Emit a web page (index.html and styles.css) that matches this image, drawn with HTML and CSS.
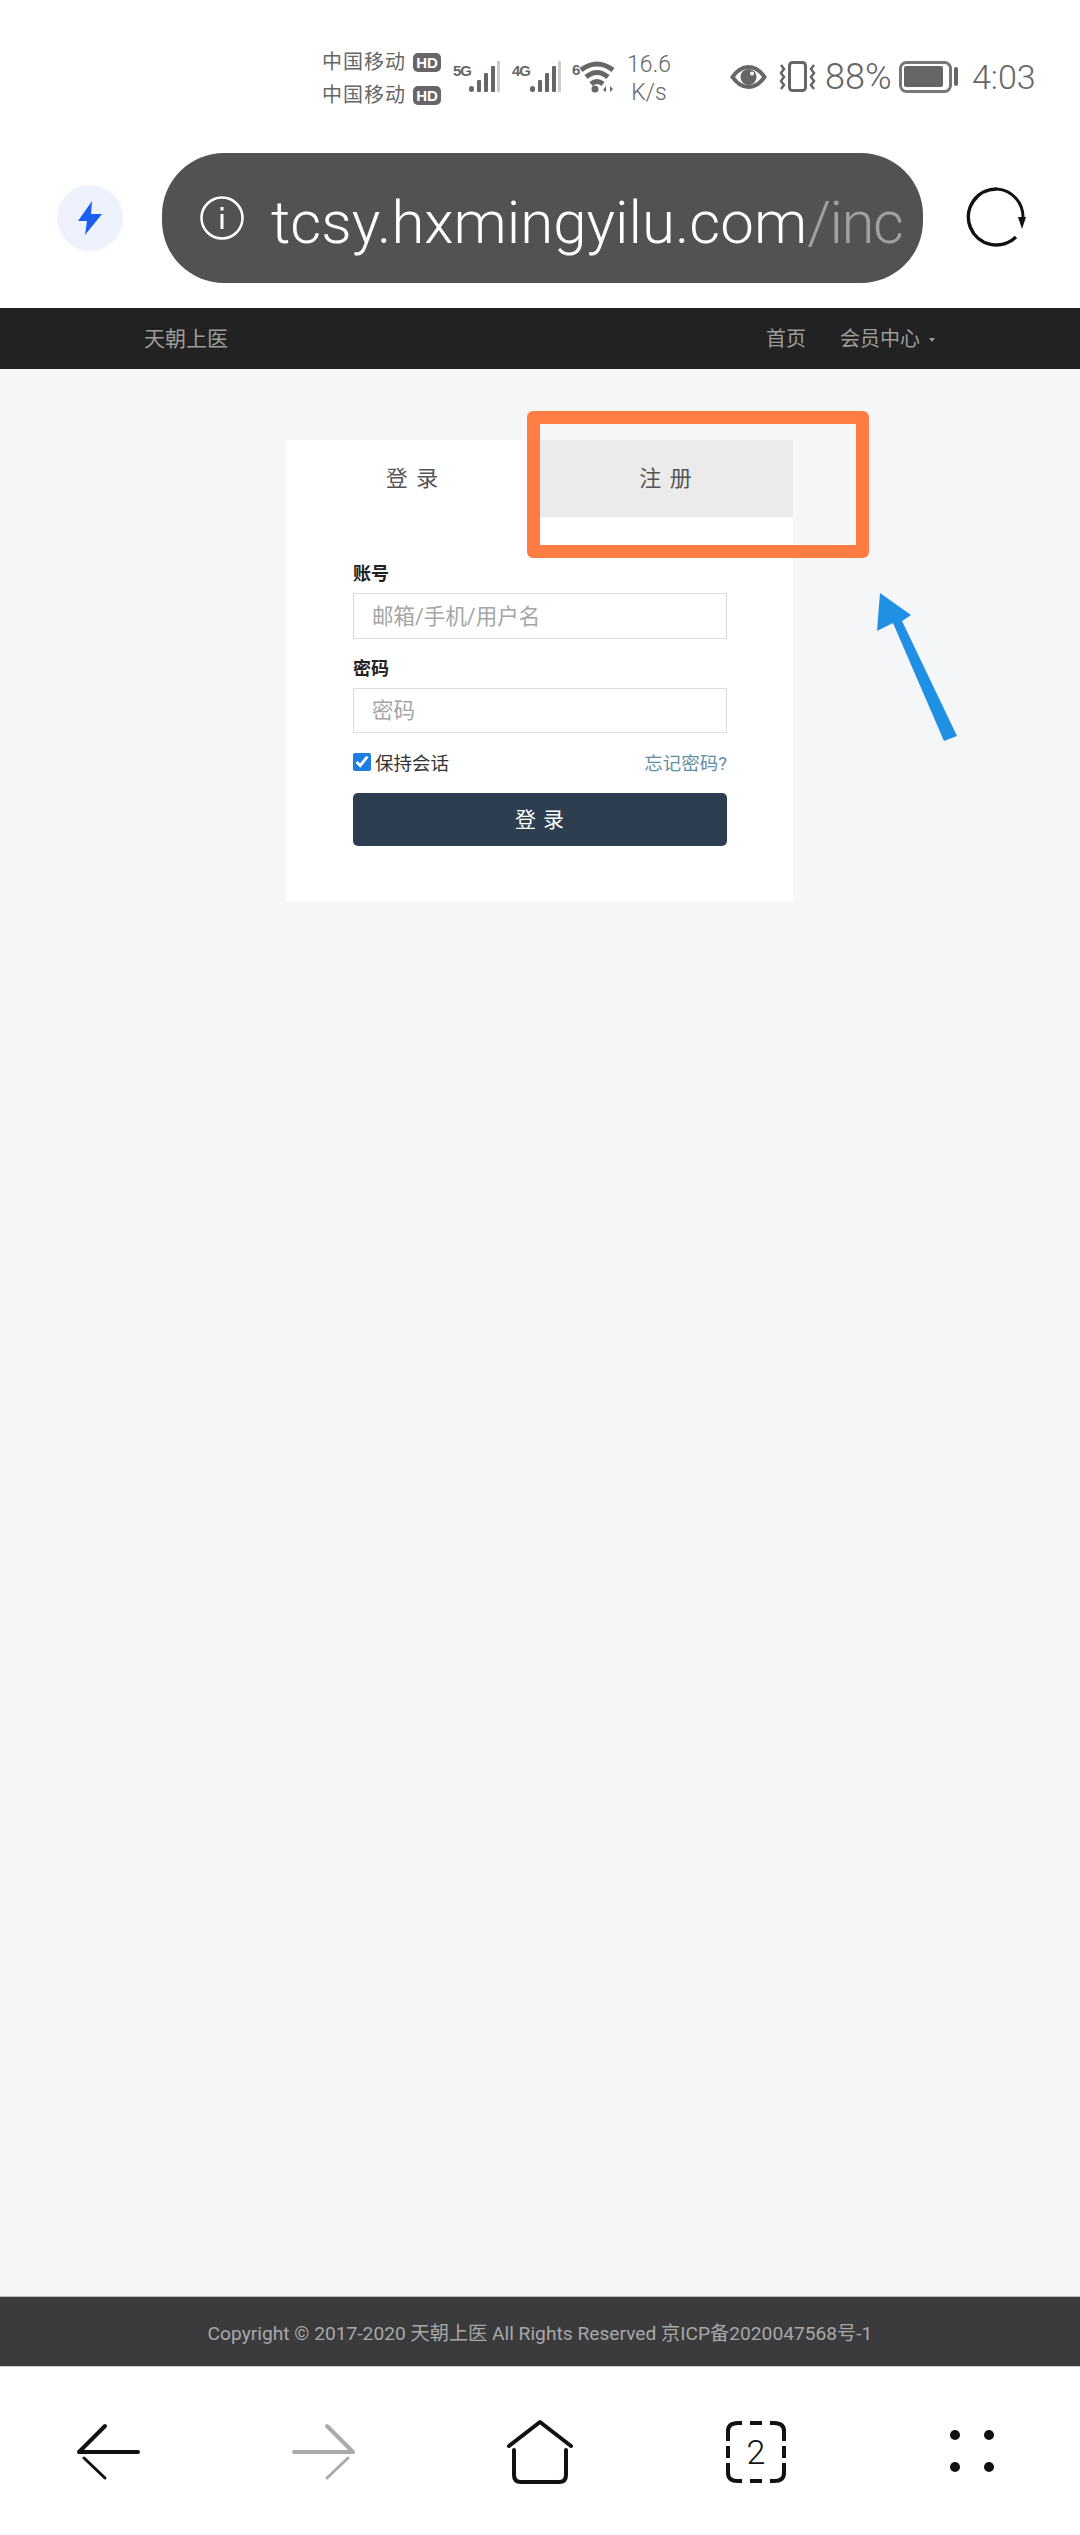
FILE: index.html
```html
<!DOCTYPE html>
<html lang="zh-CN">
<head>
  <meta charset="UTF-8">
  <meta name="viewport" content="width=device-width, initial-scale=1.0">
  <title>天朝上医</title>
  <link rel="stylesheet" href="styles.css">
</head>
<body>
  <div class="status-bar">
    <div class="carriers">
      <div class="carrier"><span>中国移动</span><b class="hd">HD</b></div>
      <div class="carrier"><span>中国移动</span><b class="hd">HD</b></div>
    </div>
    <svg class="signal" width="48" height="32" viewBox="0 0 48 32">
      <text class="net-label" x="0" y="15">5G</text>
      <rect x="16" y="25" width="5" height="6" rx="2.5" fill="#666"/>
      <rect x="24" y="19" width="4" height="12" rx="1" fill="#666"/>
      <rect x="31" y="12" width="4" height="19" rx="1" fill="#666"/>
      <rect x="38" y="5" width="4" height="26" rx="1" fill="#666"/>
      <rect x="44" y="0" width="3" height="31" fill="#ccc"/>
    </svg>
    <svg class="signal" width="49" height="32" viewBox="0 0 49 32">
      <text class="net-label" x="0" y="15">4G</text>
      <rect x="18" y="25" width="5" height="6" rx="2.5" fill="#666"/>
      <rect x="26" y="19" width="4" height="12" rx="1" fill="#666"/>
      <rect x="33" y="12" width="4" height="19" rx="1" fill="#666"/>
      <rect x="40" y="5" width="4" height="26" rx="1" fill="#666"/>
      <rect x="46" y="0" width="3" height="31" fill="#ccc"/>
    </svg>
    <svg class="wifi" width="44" height="32" viewBox="0 0 44 32">
      <text class="wifi-label" x="0" y="14">6</text>
      <g fill="none" stroke="#666" stroke-width="5">
        <path d="M9 9 Q25 -3 41 9"/>
        <path d="M14 16 Q25 7 36 16"/>
        <path d="M19 23 Q25 18 31 23"/>
      </g>
      <circle cx="23" cy="28" r="3.5" fill="#666"/>
      <path d="M34 25 L34 31 L31 29 Z M38 25 L41 28 L38 31 Z" fill="#666"/>
    </svg>
    <div class="speed"><span>16.6</span><span>K/s</span></div>
    <svg class="eye" width="39" height="26" viewBox="0 0 39 26">
      <path d="M1 13 Q9 1 19.500 1 Q30 1 38 13 Q30 25 19.500 25 Q9 25 1 13 Z" fill="#666"/>
      <path d="M6 13 Q12 5 19.500 5 Q27 5 33 13 Q27 21 19.500 21 Q12 21 6 13 Z" fill="#fff"/>
      <circle cx="19.500" cy="13" r="8" fill="#666"/>
      <circle cx="23" cy="9.500" r="2" fill="#fff"/>
    </svg>
    <svg class="vibrate" width="37" height="31" viewBox="0 0 37 31">
      <rect x="10.500" y="1.500" width="16" height="28" rx="3" fill="none" stroke="#666" stroke-width="3"/>
      <path d="M2 4 L5 8 L2 12 L5 16 L2 20 L5 24 L2 28" fill="none" stroke="#666" stroke-width="2.500"/>
      <path d="M35 4 L32 8 L35 12 L32 16 L35 20 L32 24 L35 28" fill="none" stroke="#666" stroke-width="2.500"/>
    </svg>
    <span class="status-text percent">88%</span>
    <svg class="battery" width="59" height="32" viewBox="0 0 59 32">
      <rect x="1.500" y="1.500" width="50" height="29" rx="6" fill="none" stroke="#777" stroke-width="3"/>
      <rect x="5" y="5" width="39" height="21" rx="2" fill="#666"/>
      <rect x="55" y="6" width="4" height="19" rx="2" fill="#666"/>
    </svg>
    <span class="status-text time">4:03</span>
  </div>

  <div class="toolbar">
    <div class="speed-dial">
      <svg width="26" height="34" viewBox="0 0 26 34">
        <path d="M15 0 L1 20 L10 20 L8 34 L25 13 L14 13 Z" fill="#1a5ff0"/>
      </svg>
    </div>
    <div class="address-pill">
      <svg class="info-icon" width="44" height="44" viewBox="0 0 44 44">
        <circle cx="22" cy="22" r="20.500" fill="none" stroke="#fff" stroke-width="2.500"/>
        <rect x="20.500" y="18" width="3" height="15" fill="#fff"/>
        <rect x="20.500" y="11" width="3" height="3.500" fill="#fff"/>
      </svg>
      <div class="url">tcsy.hxmingyilu.com<span class="url-path">/inc</span></div>
    </div>
    <svg class="reload" width="60" height="60" viewBox="0 0 60 60">
      <path d="M31 2 A28 28 0 1 0 50 50" fill="none" stroke="#111" stroke-width="3.500"/>
      <path d="M31 2 A28 28 0 0 1 57 31" fill="none" stroke="#111" stroke-width="3"/>
      <path d="M52 30 L60 30 L56 42 Z" fill="#111"/>
    </svg>
  </div>

  <nav class="site-nav">
    <a class="brand">天朝上医</a>
    <div class="nav-links">
      <a>首页</a>
      <a>会员中心<i class="caret"></i></a>
    </div>
  </nav>

  <main class="page">
    <div class="login-card">
      <div class="tabs">
        <div class="tab tab-active">登 录</div>
        <div class="tab">注 册</div>
      </div>
      <form class="login-form">
        <label class="field-label">账号</label>
        <input class="field-input" type="text" placeholder="邮箱/手机/用户名">
        <label class="field-label second">密码</label>
        <input class="field-input short" type="password" placeholder="密码">
        <div class="form-row">
          <label class="remember"><input type="checkbox" checked>保持会话</label>
          <a class="forgot">忘记密码?</a>
        </div>
        <button class="submit-btn" type="button">登 录</button>
      </form>
    </div>

    <!-- annotations drawn on top of the screenshot -->
    <div class="mark-box"></div>
    <svg class="mark-arrow" width="90" height="160" viewBox="0 0 90 160">
      <path d="M10 3 L41 25 L32 31 L87 146 L74 151 L23 33 L7 41 Z" fill="#2090e5"/>
    </svg>
  </main>

  <footer class="site-footer">Copyright © 2017-2020 天朝上医 All Rights Reserved 京ICP备2020047568号-1</footer>

  <div class="bottom-bar">
    <svg width="70" height="70" viewBox="0 0 70 70">
      <path d="M32 9 L6 35 L65 35" fill="none" stroke="#111" stroke-width="4" stroke-linecap="round" stroke-linejoin="round"/>
      <path d="M11 41 L32 61" fill="none" stroke="#111" stroke-width="3" stroke-linecap="round"/>
    </svg>
    <svg width="70" height="70" viewBox="0 0 70 70">
      <path d="M38 9 L64 35 L5 35" fill="none" stroke="#aaa" stroke-width="4" stroke-linecap="round" stroke-linejoin="round"/>
      <path d="M59 41 L38 61" fill="none" stroke="#aaa" stroke-width="3" stroke-linecap="round"/>
    </svg>
    <svg width="70" height="70" viewBox="0 0 70 70">
      <path d="M4 29 L35 5 L66 29" fill="none" stroke="#111" stroke-width="4" stroke-linecap="round" stroke-linejoin="round"/>
      <path d="M9 33 L9 58 Q9 65 16 65 L54 65 Q61 65 61 58 L61 33" fill="none" stroke="#111" stroke-width="4" stroke-linecap="round"/>
    </svg>
    <svg width="70" height="70" viewBox="0 0 70 70">
      <g fill="none" stroke="#111" stroke-width="4">
        <path d="M7 24 L7 14 Q7 6 17 6 L21 6"/>
        <path d="M29 6 L41 6"/>
        <path d="M49 6 L53 6 Q63 6 63 14 L63 24"/>
        <path d="M7 29 L7 41"/>
        <path d="M63 29 L63 41"/>
        <path d="M7 46 L7 56 Q7 64 17 64 L21 64"/>
        <path d="M29 64 L41 64"/>
        <path d="M49 64 L53 64 Q63 64 63 56 L63 46"/>
      </g>
      <text class="tab-count" x="35" y="47">2</text>
    </svg>
    <svg width="70" height="70" viewBox="0 0 70 70">
      <circle cx="18" cy="18" r="5" fill="#111"/>
      <circle cx="52" cy="18" r="5" fill="#111"/>
      <circle cx="18" cy="50" r="5" fill="#111"/>
      <circle cx="52" cy="50" r="5" fill="#111"/>
    </svg>
  </div>
</body>
</html>
```

FILE: styles.css
```css
* {
  box-sizing: border-box;
}

body {
  margin: 0;
  height: 2535px;
  display: flex;
  flex-direction: column;
  background: #fff;
  font-family: Roboto, "Noto Sans CJK SC", sans-serif;
  overflow: hidden;
}

/* phone status bar */
.status-bar {
  height: 153px;
  flex: none;
  display: flex;
  align-items: center;
  padding-left: 322px;
  color: #666;
}
.carriers {
  display: flex;
  flex-direction: column;
  gap: 13px;
  width: 119px;
  margin-top: 4px;
  margin-right: 12px;
}
.carrier {
  display: flex;
  align-items: center;
  justify-content: space-between;
  height: 20px;
  font-size: 20px;
  line-height: 20px;
  letter-spacing: 1px;
}
.hd {
  width: 28px;
  height: 19px;
  background: #666;
  color: #fff;
  border-radius: 5px;
  font-family: "Liberation Sans", sans-serif;
  font-size: 15px;
  line-height: 19px;
  text-align: center;
  letter-spacing: 0;
}
.signal {
  margin-right: 11px;
  flex: none;
}
.net-label, .wifi-label {
  font-family: "Liberation Sans", sans-serif;
  font-weight: 700;
  font-size: 15px;
  letter-spacing: -1px;
  fill: #666;
}
.wifi {
  margin-right: 11px;
  flex: none;
}
.speed {
  width: 44px;
  margin-top: 4px;
  margin-right: 58px;
  display: flex;
  flex-direction: column;
  align-items: center;
  font-size: 23px;
  font-weight: 300;
  line-height: 28px;
  white-space: nowrap;
}
.eye {
  margin-right: 11px;
  flex: none;
}
.vibrate {
  margin-right: 9px;
  flex: none;
}
.status-text {
  font-size: 34px;
  font-weight: 300;
  line-height: 40px;
}
.percent {
  width: 66px;
  margin-right: 8px;
  font-size: 36px;
  white-space: nowrap;
}
.battery {
  margin-right: 14px;
  flex: none;
}

/* browser toolbar */
.toolbar {
  height: 155px;
  flex: none;
  display: flex;
  align-items: flex-start;
  padding-left: 57px;
}
.speed-dial {
  width: 66px;
  height: 66px;
  margin-top: 32px;
  margin-right: 39px;
  border-radius: 50%;
  background: #eef2fd;
  display: flex;
  align-items: center;
  justify-content: center;
}
.address-pill {
  width: 761px;
  height: 130px;
  border-radius: 62px;
  background: #525252;
  display: flex;
  align-items: center;
  padding: 0 23px 0 38px;
  margin-right: 43px;
  flex: none;
}
.info-icon {
  flex: none;
  margin-right: 27px;
}
.url {
  font-size: 60px;
  font-weight: 300;
  color: #fff;
  white-space: nowrap;
  padding-top: 8px;
}
.url-path {
  color: #a0a0a0;
  letter-spacing: -1.500px;
}
.reload {
  margin-top: 34px;
  flex: none;
}

/* site header */
.site-nav {
  height: 61px;
  flex: none;
  background: #222;
  color: #9d9d9d;
  display: flex;
  align-items: center;
  justify-content: space-between;
  padding: 0 143px 3px 144px;
  font-size: 20px;
}
.brand {
  font-size: 21px;
}
.nav-links {
  display: flex;
  gap: 34px;
  margin-right: 2px;
}
.caret {
  display: inline-block;
  margin-left: 9px;
  vertical-align: middle;
  border-top: 4px solid #9d9d9d;
  border-left: 3px solid transparent;
  border-right: 3px solid transparent;
}

/* login */
.page {
  position: relative;
  flex: 1;
  background: #f4f6f8;
  padding: 71px 0 0 286px;
}
.login-card {
  width: 507px;
  height: 461px;
  background: #fff;
}
.tabs {
  display: flex;
  height: 77px;
}
.tab {
  flex: 1;
  display: flex;
  align-items: center;
  justify-content: center;
  padding-bottom: 6px;
  font-size: 22px;
  letter-spacing: 1.500px;
  color: #555;
  background: #ebebeb;
}
.tab-active {
  background: #fff;
}
.login-form {
  display: flex;
  flex-direction: column;
  padding: 45px 66px 0 67px;
}
.field-label {
  font-size: 18px;
  font-weight: 700;
  line-height: 24px;
  color: #222;
  margin-bottom: 7px;
}
.field-label.second {
  margin-top: 18px;
  margin-bottom: 7px;
}
.field-input {
  height: 46px;
  border: 1px solid #dcdcdc;
  padding: 0 18px;
  font-family: inherit;
  font-size: 21.500px;
  background: #fff;
}
.field-input.short {
  height: 45px;
}
.field-input::placeholder {
  color: #a5a5a5;
}
.form-row {
  display: flex;
  align-items: center;
  justify-content: space-between;
  margin-top: 19px;
  height: 20px;
  font-size: 18.500px;
}
.remember {
  display: flex;
  align-items: center;
  color: #333;
}
.remember input {
  width: 18px;
  height: 18px;
  margin: 0 4px 0 0;
  accent-color: #1a7ee6;
}
.forgot {
  color: #5f8fa3;
}
.submit-btn {
  height: 53px;
  margin-top: 21px;
  padding-bottom: 5px;
  border: none;
  border-radius: 5px;
  background: #2c3e50;
  color: #fff;
  font-family: inherit;
  font-size: 21px;
  letter-spacing: 1px;
}

/* red-box style callouts */
.mark-box {
  position: absolute;
  left: 527px;
  top: 42px;
  width: 342px;
  height: 147px;
  border: 13px solid #ff7c43;
  border-radius: 6px;
}
.mark-arrow {
  position: absolute;
  left: 870px;
  top: 221px;
}

/* footer + browser bottom bar */
.site-footer {
  height: 71px;
  flex: none;
  background: #3b3b3d;
  border-top: 1px solid #bbb;
  border-bottom: 1px solid #ccc;
  color: #a8a8a8;
  display: flex;
  align-items: center;
  justify-content: center;
  font-size: 19.200px;
  white-space: nowrap;
}
.bottom-bar {
  height: 168px;
  flex: none;
  display: flex;
  justify-content: space-around;
  align-items: flex-start;
  padding-top: 50px;
}
.tab-count {
  font-size: 34px;
  font-weight: 300;
  text-anchor: middle;
  fill: #111;
}
```
